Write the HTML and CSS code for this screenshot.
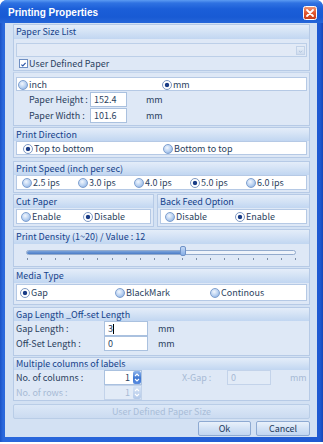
FILE: index.html
```html
<!DOCTYPE html>
<html lang="en">
<head>
    <meta charset="UTF-8">
    <meta name="viewport" content="width=device-width, initial-scale=1.0">
    <title>Printing Properties</title>
    <link rel="stylesheet" href="styles.css">
</head>
<body>
    <div class="window">
        <div class="titlebar">
            <span class="title">Printing Properties</span>
            <span class="close-btn">
                <svg width="14" height="14" viewBox="0 0 14 14">
                    <defs>
                        <linearGradient id="cg" x1="0" y1="0" x2="0" y2="1">
                            <stop offset="0" stop-color="#f19a78"/>
                            <stop offset="0.5" stop-color="#e0572f"/>
                            <stop offset="1" stop-color="#c43c1a"/>
                        </linearGradient>
                    </defs>
                    <rect x="0.5" y="0.5" width="13" height="13" rx="2" fill="url(#cg)" stroke="#fff"/>
                    <path d="M4 4 L10 10 M10 4 L4 10" stroke="#fff" stroke-width="1.8" stroke-linecap="round"/>
                </svg>
            </span>
        </div>

        <div class="client">
            <!-- paper size -->
            <div class="group g-paper">
                <div class="group-head head-tall">Paper Size List</div>
                <div class="combo">
                    <span class="combo-arrow">
                        <svg width="9" height="9" viewBox="0 0 9 9"><path d="M2.5 3.5 L4.5 5.5 L6.5 3.5" stroke="#a8bcd8" stroke-width="1.2" fill="none"/></svg>
                    </span>
                </div>
                <div class="check-row">
                    <span class="checkbox">
                        <svg width="9" height="9" viewBox="0 0 9 9"><path d="M1.8 4.6 L3.6 6.4 L7.2 2.4" stroke="#2a55a8" stroke-width="1.5" fill="none"/></svg>
                    </span>
                    User Defined Paper
                </div>
            </div>

            <div class="group g-size">
                <div class="option-box opts-unit">
                    <span class="opt"><span class="radio"></span>inch</span>
                    <span class="opt"><span class="radio on"></span>mm</span>
                </div>
                <div class="field-row row-size">
                    <span class="label">Paper Height :</span>
                    <span class="input w-size">152.4</span>
                    <span class="unit">mm</span>
                </div>
                <div class="field-row row-size">
                    <span class="label">Paper Width :</span>
                    <span class="input w-size">101.6</span>
                    <span class="unit">mm</span>
                </div>
            </div>

            <!-- direction -->
            <div class="group g-dir">
                <div class="group-head">Print Direction</div>
                <div class="option-box opts-dir">
                    <span class="opt"><span class="radio on"></span>Top to bottom</span>
                    <span class="opt"><span class="radio"></span>Bottom to top</span>
                </div>
            </div>

            <!-- speed -->
            <div class="group g-speed">
                <div class="group-head">Print Speed (inch per sec)</div>
                <div class="option-box opts-speed">
                    <span class="opt"><span class="radio"></span>2.5 ips</span>
                    <span class="opt"><span class="radio"></span>3.0 ips</span>
                    <span class="opt"><span class="radio"></span>4.0 ips</span>
                    <span class="opt"><span class="radio on"></span>5.0 ips</span>
                    <span class="opt"><span class="radio"></span>6.0 ips</span>
                </div>
            </div>

            <!-- cut / back feed -->
            <div class="pair">
                <div class="group g-half">
                    <div class="group-head">Cut Paper</div>
                    <div class="option-box opts-cut">
                        <span class="opt"><span class="radio"></span>Enable</span>
                        <span class="opt"><span class="radio on"></span>Disable</span>
                    </div>
                </div>
                <div class="group g-half">
                    <div class="group-head">Back Feed Option</div>
                    <div class="option-box opts-back">
                        <span class="opt"><span class="radio"></span>Disable</span>
                        <span class="opt"><span class="radio on"></span>Enable</span>
                    </div>
                </div>
            </div>

            <!-- density -->
            <div class="group g-density">
                <div class="group-head head-tall">Print Density (1~20) / Value : 12</div>
                <div class="slider">
                    <div class="track"><div class="track-fill"></div></div>
                    <span class="thumb"></span>
                    <div class="ticks">
                        <i></i><i></i><i></i><i></i><i></i><i></i><i></i><i></i><i></i><i></i>
                        <i></i><i></i><i></i><i></i><i></i><i></i><i></i><i></i><i></i><i></i>
                    </div>
                </div>
            </div>

            <!-- media -->
            <div class="group g-media">
                <div class="group-head head-tall">Media Type</div>
                <div class="option-box opts-media">
                    <span class="opt"><span class="radio on"></span>Gap</span>
                    <span class="opt"><span class="radio"></span>BlackMark</span>
                    <span class="opt"><span class="radio"></span>Continous</span>
                </div>
            </div>

            <!-- gap length -->
            <div class="group g-gap">
                <div class="group-head">Gap Length _Off-set Length</div>
                <div class="field-row row-gap">
                    <span class="label">Gap Length :</span>
                    <span class="input w-gap">3<span class="caret"></span></span>
                    <span class="unit">mm</span>
                </div>
                <div class="field-row row-gap">
                    <span class="label">Off-Set Length :</span>
                    <span class="input w-gap">0</span>
                    <span class="unit">mm</span>
                </div>
            </div>

            <!-- columns -->
            <div class="group g-cols">
                <div class="group-head head-short">Multiple columns of labels</div>
                <div class="field-row row-gap">
                    <span class="label">No. of columns :</span>
                    <span class="spin">
                        <span class="spin-val">1</span>
                        <span class="spin-btn">
                            <svg width="8" height="13" viewBox="0 0 8 13"><path d="M2 5 L4 3 L6 5 M2 8 L4 10 L6 8" stroke="#fff" stroke-width="1.1" fill="none"/></svg>
                        </span>
                    </span>
                    <span class="label xgap off">X-Gap :</span>
                    <span class="input w-gap off">0</span>
                    <span class="unit unit-far off">mm</span>
                </div>
                <div class="field-row row-gap">
                    <span class="label off">No. of rows :</span>
                    <span class="spin off">
                        <span class="spin-val">1</span>
                        <span class="spin-btn">
                            <svg width="8" height="13" viewBox="0 0 8 13"><path d="M2 5 L4 3 L6 5 M2 8 L4 10 L6 8" stroke="#fff" stroke-width="1.1" fill="none"/></svg>
                        </span>
                    </span>
                </div>
            </div>

            <button class="wide-btn" disabled>User Defined Paper Size</button>

            <div class="actions">
                <button class="btn btn-ok">Ok</button>
                <button class="btn btn-cancel">Cancel</button>
            </div>
        </div>
    </div>
</body>
</html>
```

FILE: styles.css
```css
body {
    margin: 0;
    background-color: #fff;
    font-family: "Noto Sans CJK KR", "Liberation Sans", sans-serif;
    font-size: 9px;
    color: #2b3f5e;
}
.window {
    width: 323px;
    height: 442px;
    background: linear-gradient(to right, #1a52c6, #2a68dc 3px, #1f5ad2 320px, #1546b8);
    border-radius: 7px 7px 0 0;
    display: flex;
    flex-direction: column;
}
.titlebar {
    height: 23px;
    box-sizing: border-box;
    padding: 2px 6px 0 8px;
    display: flex;
    align-items: center;
    border-radius: 7px 7px 0 0;
    background: linear-gradient(#5c9bf2, #2f72e2 3px, #1b5ed8 9px, #185ad4 17px, #2566d9);
}
.title {
    flex: 1;
    font: bold 10px "Liberation Sans", sans-serif;
    color: #fff;
}
.close-btn {
    width: 14px;
    height: 14px;
    display: flex;
}
.client {
    flex: 1;
    margin: 0 6px 5px 5px;
    padding: 1px 7px 0 8px;
    background-color: #d3e1f3;
    display: flex;
    flex-direction: column;
}

/* group panels */
.group {
    box-sizing: border-box;
    background-color: #dee8f6;
    border: 1px solid #b6cae6;
    display: flex;
    flex-direction: column;
    padding: 0 2px;
}
.group-head {
    height: 13px;
    margin: 0 -2px;
    padding-left: 2px;
    line-height: 13px;
    color: #15428b;
    background: linear-gradient(#e4edf9, #d3e2f5 50%, #c1d6f1);
}
.head-tall { height: 14px; line-height: 14px; }
.head-short { height: 12px; line-height: 12px; }

.g-paper { height: 47px; }
.g-size { height: 54px; margin-top: 1px; border-top-color: #c4d5ec; }
.g-dir { height: 31px; margin-top: 1px; }
.g-speed { height: 32px; margin-top: 3px; }
.pair {
    display: grid;
    grid-template-columns: 141px 1fr;
    gap: 3px;
    margin-top: 1px;
}
.g-half { height: 33px; }
.g-density { height: 38px; margin-top: 2px; }
.g-media { height: 37px; margin-top: 1px; }
.g-gap { height: 49px; margin-top: 2px; }
.g-cols { height: 44px; margin-top: 1px; }

/* combo */
.combo {
    height: 14px;
    margin-top: 4px;
    box-sizing: border-box;
    border: 1px solid #bccfe8;
    background-color: #e2eaf6;
    display: flex;
    justify-content: flex-end;
    align-items: center;
    padding-right: 1px;
}
.combo-arrow {
    width: 9px;
    height: 9px;
    box-sizing: border-box;
    border: 1px solid #c2d2e8;
    background: linear-gradient(#e6eef8, #cfdcee);
    display: flex;
}
.check-row {
    height: 12px;
    display: flex;
    align-items: center;
    padding-left: 3px;
    gap: 1px;
}
.checkbox {
    width: 9px;
    height: 9px;
    box-sizing: border-box;
    border: 1px solid #6f8fc2;
    background-color: #fff;
    display: flex;
}

/* option boxes */
.option-box {
    box-sizing: border-box;
    height: 15px;
    background-color: #fff;
    border: 1px solid #b5c9e5;
    display: grid;
    align-items: center;
}
.opts-unit { margin-top: 4px; height: 14px; padding-left: 1px; grid-template-columns: 144px 1fr; }
.opts-dir { height: 14px; padding-left: 6px; grid-template-columns: 140px 1fr; }
.opts-speed { padding-left: 5px; grid-template-columns: repeat(5, 56px); }
.opts-cut { margin-top: 1px; padding-left: 4px; grid-template-columns: 62px 1fr; }
.opts-back { margin-top: 1px; padding-left: 4px; grid-template-columns: 70px 1fr; }
.opts-media { margin-top: 1px; height: 17px; padding-left: 3px; grid-template-columns: 95px 95px 1fr; }
.opt {
    display: flex;
    align-items: center;
    gap: 1px;
    white-space: nowrap;
}
.radio {
    width: 10px;
    height: 10px;
    box-sizing: border-box;
    border-radius: 50%;
    border: 1px solid #7e9fcf;
    background: radial-gradient(circle at 40% 35%, #f2f7fe, #b6cff0 55%, #7aa2da);
}
.radio.on {
    border-color: #7d98c3;
    background: radial-gradient(circle, #1b3d86 0, #1b3d86 1.8px, #fff 2.6px);
}

/* label + input rows */
.field-row {
    display: flex;
    align-items: center;
    height: 15px;
}
.row-size { margin-top: 1px; padding-left: 13px; }
.row-size .label { width: 61px; }
.row-size .unit { margin-left: 19px; }
.row-gap { height: 15px; }
.row-gap .label { width: 88px; }
.row-gap .unit { margin-left: 10px; }
.input {
    box-sizing: border-box;
    height: 15px;
    background-color: #fff;
    border: 1px solid #aac1df;
    padding-left: 3px;
    line-height: 13px;
    display: flex;
    align-items: center;
}
.w-size { width: 37px; }
.w-gap { width: 44px; }
.caret {
    width: 1px;
    height: 10px;
    background-color: #000;
}

/* spinner */
.spin {
    box-sizing: border-box;
    width: 38px;
    height: 15px;
    background-color: #fff;
    border: 1px solid #aac1df;
    display: flex;
    align-items: center;
    justify-content: flex-end;
}
.spin-val { margin-right: 3px; }
.spin-btn {
    width: 8px;
    height: 13px;
    border-radius: 2px;
    background: linear-gradient(#8fb5ec, #3f77d2 55%, #5a8ce0);
    display: flex;
}
.spin.off {
    background-color: #e2ebf7;
    border-color: #c3d3ea;
    color: #a7bad5;
}
.spin.off .spin-btn { background: linear-gradient(#d6e3f5, #b3c9e9); }
.row-gap .xgap { width: 45px; margin-left: 40px; }
.input.off {
    background-color: #e2ebf7;
    border-color: #c3d3ea;
}
.row-gap .unit-far { margin-left: 19px; }
.off { color: #a7bad5; }

/* slider */
.slider {
    position: relative;
    height: 23px;
    padding: 6px 11px 0 10px;
    box-sizing: border-box;
}
.track {
    height: 5px;
    box-sizing: border-box;
    border: 1px solid #93abcd;
    border-radius: 3px;
    background-color: #eef3fa;
    overflow: hidden;
}
.track-fill {
    width: 156px;
    height: 100%;
    background: linear-gradient(#7aa3dc, #4b7cc6);
}
.thumb {
    position: absolute;
    left: 164px;
    top: 2px;
    width: 6px;
    height: 10px;
    box-sizing: border-box;
    border: 1px solid #6f92c8;
    border-radius: 2px;
    background: linear-gradient(#c3d8f5, #86aee6);
}
.ticks {
    display: flex;
    justify-content: space-between;
    margin-top: 3px;
    padding: 0 0 0 1px;
}
.ticks i {
    width: 1px;
    height: 2px;
    background-color: #7b8ea8;
}

/* buttons */
.wide-btn {
    margin-top: 3px;
    height: 15px;
    padding: 0;
    border: 1px solid #b9cde7;
    border-radius: 2px;
    background: linear-gradient(#dce8f7, #cbdbf1);
    color: #a9bdd8;
    font-family: inherit;
    font-size: 9px;
}
.actions {
    display: flex;
    justify-content: flex-end;
    gap: 5px;
    margin-top: 2px;
}
.btn {
    height: 15px;
    padding: 0;
    border: 1px solid #8eaad2;
    border-radius: 2px;
    background: linear-gradient(#e9f1fb, #d3e2f5 50%, #c2d6f1);
    color: #1e395b;
    font-family: inherit;
    font-size: 9px;
}
.btn-ok { width: 53px; }
.btn-cancel { width: 54px; }
```
